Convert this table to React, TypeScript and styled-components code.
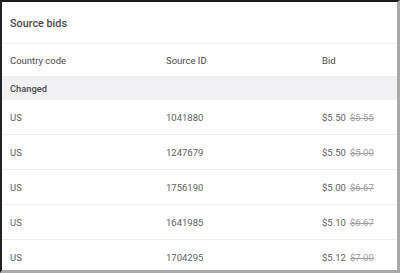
import styled, {createGlobalStyle} from "styled-components";

const GlobalStyle = createGlobalStyle`
    html, body {
        margin: 0;
        padding: 0;
        background: #ffffff;
    }
`;

const Frame = styled.div`
    width: 400px;
    height: 273px;
    box-sizing: border-box;
    border-top: 2px solid #1a1a1a;
    border-left: 2px solid #222;
    border-right: 3px solid #a9a9a9;
    border-bottom: 3px solid #a9a9a9;
    overflow: hidden;
    font-family: Roboto, "Liberation Sans", sans-serif;
    color: #616161;
    background: #fff;
`;

const Title = styled.div`
    height: 42px;
    box-sizing: border-box;
    display: flex;
    align-items: center;
    padding: 1px 8px 0;
    font-size: 10.8px;
    font-weight: 500;
    color: #4a4a4a;
    border-bottom: 1px solid #f0f0f0;
`;

const Row = styled.div<{ $height: number; $shade?: boolean }>`
    display: grid;
    grid-template-columns: 156px 156px 1fr;
    align-items: center;
    box-sizing: border-box;
    height: ${(p) => p.$height}px;
    padding: 0 8px;
    font-size: 9.5px;
    background: ${(p) => (p.$shade ? "#f1f1f3" : "transparent")};
    border-bottom: 1px solid ${(p) => (p.$shade ? "transparent" : "#eeeeee")};

    &:last-child {
        border-bottom: none;
    }
`;

const HeadCell = styled.span`
    font-size: 9.5px;
    color: #4a4a4a;
`;

const GroupLabel = styled.span`
    font-size: 9.3px;
    font-weight: 500;
    color: #4a4a4a;
`;

const Old = styled.span`
    margin-left: 4px;
    text-decoration: line-through;
    color: #9e9e9e;
`;

const rows = [
    {country: "US", id: "1041880", bid: "$5.50", old: "$5.55"},
    {country: "US", id: "1247679", bid: "$5.50", old: "$5.00"},
    {country: "US", id: "1756190", bid: "$5.00", old: "$6.67"},
    {country: "US", id: "1641985", bid: "$5.10", old: "$6.67"},
    {country: "US", id: "1704295", bid: "$5.12", old: "$7.00"},
];

export default function App() {
    return (
        <>
            <GlobalStyle/>
            <Frame>
                <Title>Source bids</Title>
                <Row $height={33}>
                    <HeadCell>Country code</HeadCell>
                    <HeadCell>Source ID</HeadCell>
                    <HeadCell>Bid</HeadCell>
                </Row>
                <Row $height={23} $shade>
                    <GroupLabel>Changed</GroupLabel>
                </Row>
                {rows.map((r) => (
                    <Row $height={35} key={r.id}>
                        <span>{r.country}</span>
                        <span>{r.id}</span>
                        <span>
                            {r.bid}
                            <Old>{r.old}</Old>
                        </span>
                    </Row>
                ))}
            </Frame>
        </>
    );
}
